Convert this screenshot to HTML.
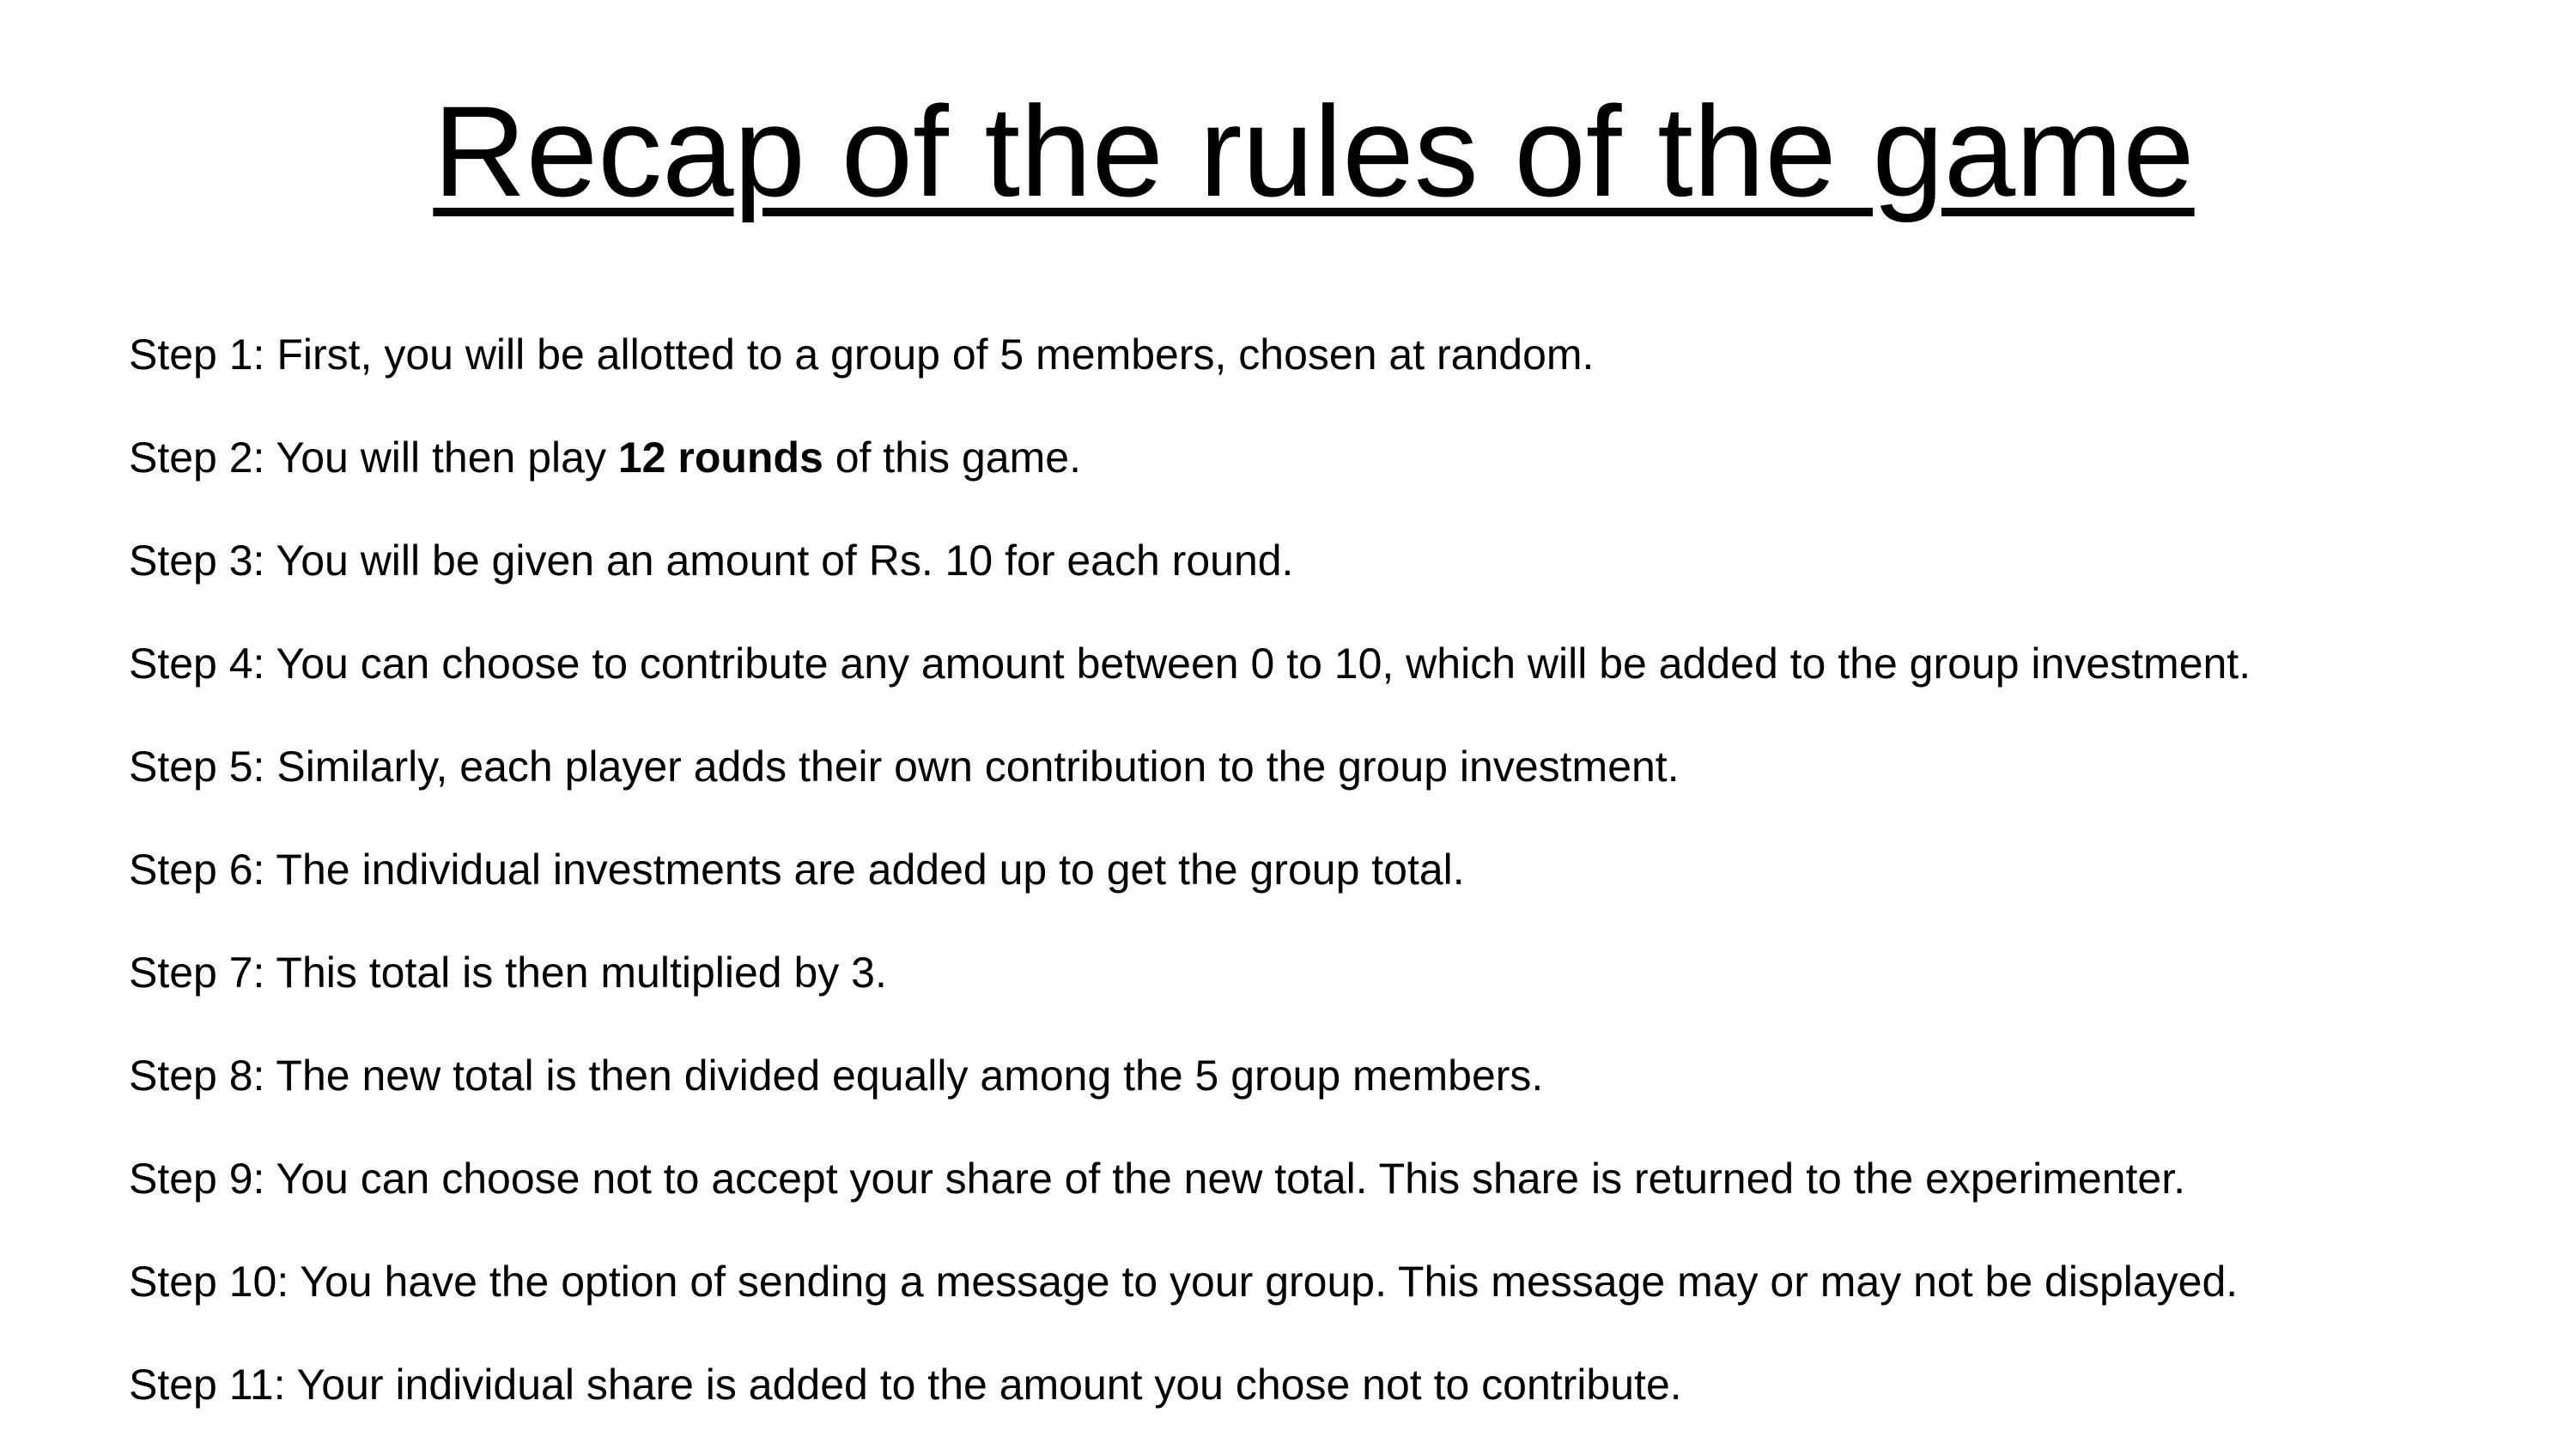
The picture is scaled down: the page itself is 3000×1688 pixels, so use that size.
<!DOCTYPE html>
<html><head><meta charset="utf-8"><style>
html,body{margin:0;padding:0;background:#fff;}
body{width:3000px;height:1688px;position:relative;overflow:hidden;font-family:"Liberation Sans",Arial,sans-serif;color:#000;}
h1{position:absolute;left:0;width:3060px;top:0;margin:0;text-align:center;font-weight:normal;font-size:150px;line-height:1;}
h1 span{position:absolute;left:0;right:0;top:101px;text-decoration:underline;text-decoration-thickness:10px;text-underline-offset:14px;}
.l{position:absolute;left:150px;font-size:50px;line-height:1;white-space:nowrap;}
</style></head><body>
<h1><span>Recap of the rules of the game</span></h1>
<div class="l" style="top:388px">Step 1: First, you will be allotted to a group of 5 members, chosen at random.</div>
<div class="l" style="top:508px">Step 2: You will then play <b>12 rounds</b> of this game.</div>
<div class="l" style="top:628px">Step 3: You will be given an amount of Rs. 10 for each round.</div>
<div class="l" style="top:748px">Step 4: You can choose to contribute any amount between 0 to 10, which will be added to the group investment.</div>
<div class="l" style="top:868px">Step 5: Similarly, each player adds their own contribution to the group investment.</div>
<div class="l" style="top:988px">Step 6: The individual investments are added up to get the group total.</div>
<div class="l" style="top:1108px">Step 7: This total is then multiplied by 3.</div>
<div class="l" style="top:1228px">Step 8: The new total is then divided equally among the 5 group members.</div>
<div class="l" style="top:1348px">Step 9: You can choose not to accept your share of the new total. This share is returned to the experimenter.</div>
<div class="l" style="top:1468px">Step 10: You have the option of sending a message to your group. This message may or may not be displayed.</div>
<div class="l" style="top:1588px">Step 11: Your individual share is added to the amount you chose not to contribute.</div>
</body></html>
